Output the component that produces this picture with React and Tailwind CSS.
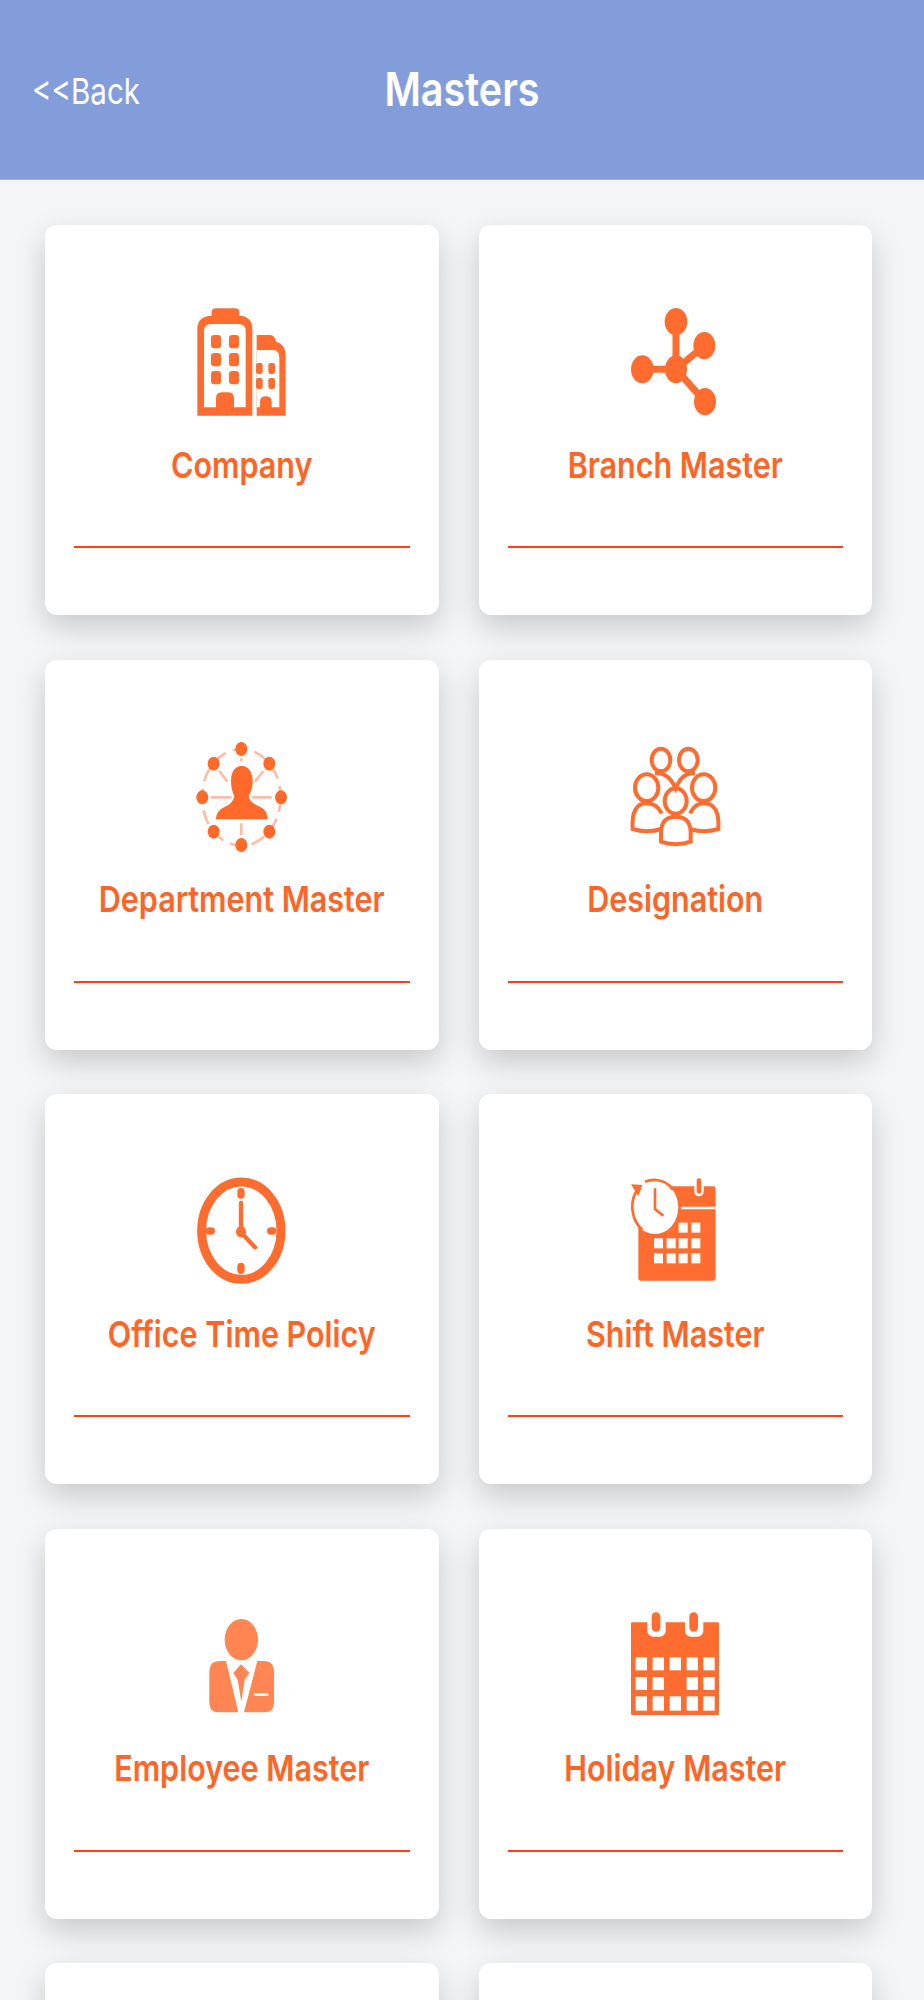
import React from 'react';

const ORANGE = '#ff6c2f';

function CompanyIcon() {
  return (
    <svg width="140" height="140" viewBox="66 33 420 420">
      <path d="M142 410V150Q142 112 185 110V100Q185 88 197 88H256Q268 88 268 100V110Q307 112 307 150V410Z" fill={ORANGE} />
      <path d="M162 385V155Q162 135 185 135H265Q287 135 287 155V385H252V358Q252 340 235 340H215Q198 340 198 358V385Z" fill="#fff" />
      {[168, 222, 276].map((y) =>
        [183, 237].map((x) => <rect key={`${x}-${y}`} x={x} y={y} width="30" height="40" rx="9" fill={ORANGE} />)
      )}
      <path d="M320 410V168H360Q375 168 378 188Q407 195 407 232V410Z" fill={ORANGE} />
      <path d="M320 385V213H372Q388 215 388 235V385H365V368Q365 352 348 352Q330 352 330 368V385Z" fill="#fff" />
      {[252, 297].map((y) =>
        [318, 355].map((x) => <rect key={`${x}-${y}`} x={x} y={y} width="20" height="33" rx="7" fill={ORANGE} />)
      )}
    </svg>
  );
}

function BranchIcon() {
  return (
    <svg width="140" height="140" viewBox="75 33 420 420" fill={ORANGE}>
      <path d="M288 128V271M187 271H288M373 200L288 271L375 368" stroke={ORANGE} strokeWidth="21" fill="none" />
      <ellipse cx="288" cy="128" rx="34" ry="41" />
      <ellipse cx="373" cy="200" rx="33" ry="41" />
      <ellipse cx="187" cy="271" rx="34" ry="42" />
      <ellipse cx="288" cy="271" rx="33" ry="42" />
      <ellipse cx="375" cy="368" rx="33" ry="41" />
    </svg>
  );
}

function DepartmentIcon() {
  const nodes = [[214, 72], [131, 116], [298, 116], [97, 217], [333, 217], [131, 320], [298, 320], [214, 360]];
  return (
    <svg width="140" height="140" viewBox="6 0 420 420">
      <ellipse cx="214" cy="217" rx="118" ry="145" fill="none" stroke="#ffbda6" strokeWidth="8" strokeDasharray="44 22" />
      <path d="M148 138L172 170M280 138L255 170M122 217H185M245 217H305M214 295V330M214 100V108" stroke="#ffbda6" strokeWidth="8" />
      {nodes.map(([cx, cy]) => (
        <ellipse key={`${cx}-${cy}`} cx={cx} cy={cy} rx="18" ry="21" fill="#ff6a2a" />
      ))}
      <path d="M215 122Q245 125 248 165Q248 195 236 213Q240 235 270 245Q292 255 293 283H137Q140 255 165 245Q190 235 193 213Q183 195 183 165Q185 125 215 122Z" fill="#ff6a2a" />
    </svg>
  );
}

function DesignationIcon() {
  return (
    <svg width="140" height="140" viewBox="0 0 420 420" fill="none" stroke={ORANGE} strokeWidth="12">
      <ellipse cx="168" cy="105" rx="28" ry="34" />
      <ellipse cx="250" cy="105" rx="28" ry="34" />
      <ellipse cx="125" cy="188" rx="35" ry="40" />
      <ellipse cx="296" cy="188" rx="35" ry="40" />
      <ellipse cx="212" cy="228" rx="33" ry="38" />
      <path d="M150 145Q190 140 212 190Q232 140 270 145" />
      <path d="M170 312Q125 325 83 312Q78 235 125 235Q155 235 170 265" />
      <path d="M255 312Q296 325 340 312Q345 235 296 235Q270 235 255 265" />
      <path d="M168 350V320Q170 275 212 275Q255 275 257 320V350Q212 365 168 350Z" />
    </svg>
  );
}

function ClockIcon() {
  return (
    <svg width="140" height="140" viewBox="6 0 420 420" fill="none" stroke={ORANGE}>
      <ellipse cx="214" cy="215" rx="119" ry="146" strokeWidth="27" />
      <path d="M213 98V108M213 322V334M118 216H124M302 216H308" strokeWidth="22" strokeLinecap="round" />
      <path d="M213 132V220L255 265" strokeWidth="13" strokeLinecap="round" />
      <ellipse cx="213" cy="218" rx="15" ry="17" fill={ORANGE} stroke="none" />
    </svg>
  );
}

function ShiftIcon() {
  const cells = [
    [221, 191], [259, 191],
    [147, 238], [185, 238], [221, 238], [259, 238],
    [147, 283], [185, 283], [221, 283], [259, 283],
  ];
  return (
    <svg width="140" height="140" viewBox="0 0 420 420">
      <rect x="100" y="82" width="232" height="283" rx="8" fill={ORANGE} />
      <path d="M228 147H332" stroke="#fff" strokeWidth="8" />
      <rect x="268" y="52" width="28" height="60" rx="14" fill="#fff" />
      <rect x="275" y="58" width="14" height="46" rx="7" fill={ORANGE} />
      {cells.map(([x, y]) => (
        <rect key={`${x}-${y}`} x={x} y={y} width="27" height="30" fill="#fff" />
      ))}
      <ellipse cx="150" cy="145" rx="70" ry="80" fill="#fff" />
      <path d="M120 68Q150 56 180 70Q195 78 204 92" fill="none" stroke={ORANGE} strokeWidth="8" />
      <path d="M98 92Q80 115 82 150Q86 190 112 212" fill="none" stroke={ORANGE} strokeWidth="8" />
      <path d="M78 76L112 78L100 112Z" fill={ORANGE} />
      <path d="M150 88V150L175 170" fill="none" stroke={ORANGE} strokeWidth="8" />
    </svg>
  );
}

function EmployeeIcon() {
  const fill = '#ff8653';
  return (
    <svg width="140" height="140" viewBox="6 -15 420 420" fill={fill}>
      <ellipse cx="214" cy="122" rx="50" ry="62" />
      <path d="M205 340H145Q118 340 118 310V220Q118 186 150 186H168Z" />
      <path d="M222 340L262 186H282Q312 186 312 220V310Q312 340 285 340Z" />
      <path d="M213 196L238 222L224 242L214 308L203 242L190 222Z" />
      <path d="M253 287H295" stroke="#fff" strokeWidth="8" />
    </svg>
  );
}

function HolidayIcon() {
  const cols = [92, 143, 194, 245, 295];
  const rows = [[175, 39], [234, 39], [292, 43]];
  return (
    <svg width="140" height="140" viewBox="0 -15 420 420">
      <rect x="78" y="70" width="264" height="278" rx="4" fill={ORANGE} />
      <rect x="127" y="50" width="55" height="63" rx="18" fill="#fff" />
      <rect x="240" y="50" width="55" height="63" rx="18" fill="#fff" />
      <rect x="140" y="40" width="26" height="58" rx="13" fill={ORANGE} />
      <rect x="253" y="40" width="26" height="58" rx="13" fill={ORANGE} />
      {rows.map(([y, h], r) =>
        cols.map((x, c) =>
          r === 1 && c === 2 ? null : <rect key={`${x}-${y}`} x={x} y={y} width="34" height={h} fill="#fff" />
        )
      )}
    </svg>
  );
}

const masters = [
  { title: 'Company', icon: <CompanyIcon /> },
  { title: 'Branch Master', icon: <BranchIcon /> },
  { title: 'Department Master', icon: <DepartmentIcon /> },
  { title: 'Designation', icon: <DesignationIcon /> },
  { title: 'Office Time Policy', icon: <ClockIcon /> },
  { title: 'Shift Master', icon: <ShiftIcon /> },
  { title: 'Employee Master', icon: <EmployeeIcon /> },
  { title: 'Holiday Master', icon: <HolidayIcon /> },
  { title: '', icon: null },
  { title: '', icon: null },
];

function MasterCard({ title, icon }) {
  return (
    <div className="h-[390px] rounded-xl bg-white px-[29px] pt-[65px] shadow-[0_12px_30px_rgba(0,0,0,0.18)]">
      <div className="flex h-[140px] justify-center">{icon}</div>
      <div className="flex h-[70px] items-center justify-center">
        {title && (
          <span className="inline-block scale-y-[1.17] text-[30.5px] leading-none font-semibold text-[#ff6526]">
            {title}
          </span>
        )}
      </div>
      <div className="mt-[46px] h-[2px] bg-[#ff3f14]" />
    </div>
  );
}

export default function App() {
  return (
    <div className="h-[2000px] overflow-hidden bg-[#f4f5f7] font-['Inter',sans-serif]">
      <header className="relative flex h-[180px] items-center justify-center border-b border-[#9db3e6] bg-[#839ddb] text-white">
        <a className="absolute top-[72px] left-[32px] inline-block scale-y-[1.22] text-[29.5px] leading-[38px] font-normal">
          {'<<Back'}
        </a>
        <h1 className="inline-block scale-y-[1.19] text-[39.5px] leading-none font-semibold">Masters</h1>
      </header>
      <main className="grid grid-cols-2 gap-x-[40px] gap-y-[44.5px] pt-[45px] pr-[52px] pl-[45px]">
        {masters.map((item, i) => (
          <MasterCard key={i} title={item.title} icon={item.icon} />
        ))}
      </main>
    </div>
  );
}
